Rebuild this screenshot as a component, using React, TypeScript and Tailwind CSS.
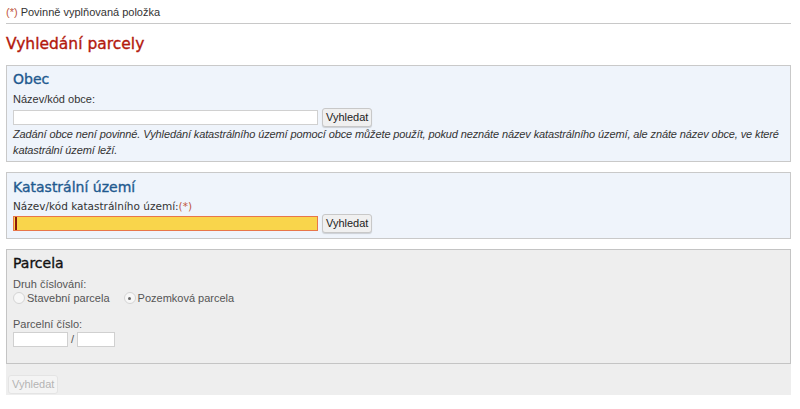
import React from "react";

const arial = { fontFamily: '"Liberation Sans", Arial, sans-serif' };
const dejavu = { fontFamily: '"DejaVu Sans", Verdana, sans-serif' };

function SearchButton({ disabled }: { disabled?: boolean }) {
  return (
    <button
      type="button"
      disabled={disabled}
      style={arial}
      className={`h-[19px] rounded-[3px] border px-[3px] text-[11px] leading-none ${
        disabled
          ? "border-[#e4e4e4] bg-[#f4f4f4] text-[#b5b5b5]"
          : "border-[#c8c8c8] bg-[#f0f0f0] text-[#222] shadow-[0_1px_1px_rgba(0,0,0,0.15)]"
      }`}
    >
      Vyhledat
    </button>
  );
}

function Radio({ checked, label }: { checked?: boolean; label: string }) {
  return (
    <label className="flex items-center gap-[2px]">
      <span className="flex h-[12px] w-[12px] items-center justify-center rounded-full border border-[#d4d4d4] bg-[#f7f7f7]">
        {checked ? <span className="h-[3px] w-[3px] rounded-full bg-[#666]" /> : null}
      </span>
      <span>{label}</span>
    </label>
  );
}

export default function App() {
  return (
    <div className="h-[409px] w-[800px] bg-white text-[#222]" style={arial}>
      <div className="px-[6px] pt-[4px]">
        <p className="h-[16px] text-[11px] leading-[16px] text-[#333]">
          <span className="text-[#c0573e]">(*)</span> Povinně vyplňovaná položka
        </p>
        <div className="mr-[3px] mt-[3px] h-px bg-[#c8c8c8]" />
        <h1
          style={dejavu}
          className="mt-[10px] h-[20px] text-[15.5px] leading-[20px] text-[#b3190d] [-webkit-text-stroke:0.35px_#b3190d]"
        >
          Vyhledání parcely
        </h1>

        <section className="mr-[3px] mt-[11px] h-[97px] border border-[#c9c9c9] bg-[#eff4fb] px-[6px] pt-[3px]">
          <h2
            style={dejavu}
            className="h-[20px] text-[14px] leading-[20px] text-[#1f5a8f] [-webkit-text-stroke:0.35px_#1f5a8f]"
          >
            Obec
          </h2>
          <div className="mt-[3px] text-[11px] leading-[14px] text-[#333]">Název/kód obce:</div>
          <div className="mt-[2px] flex items-center gap-[4px]">
            <input
              type="text"
              className="h-[15px] w-[305px] border border-[#d0d0d0] bg-white"
            />
            <SearchButton />
          </div>
          <p className="-mt-[1px] whitespace-nowrap text-[11px] italic leading-[16px] tracking-[-0.12px] text-[#333]">
            Zadání obce není povinné. Vyhledání katastrálního území pomocí obce můžete použít, pokud
            neznáte název katastrálního území, ale znáte název obce, ve které
            <br />
            katastrální území leží.
          </p>
        </section>

        <section className="mr-[3px] mt-[10px] h-[67px] border border-[#c9c9c9] bg-[#eff4fb] px-[6px] pt-[4px]">
          <h2
            style={dejavu}
            className="h-[20px] text-[14px] leading-[20px] text-[#1f5a8f] [-webkit-text-stroke:0.35px_#1f5a8f]"
          >
            Katastrální území
          </h2>
          <div style={dejavu} className="mt-[2px] text-[10.5px] leading-[14px] text-[#333]">
            Název/kód katastrálního území:<span className="text-[#c0573e]">(*)</span>
          </div>
          <div className="mt-[1px] flex items-center gap-[4px]">
            <div className="h-[15px] w-[305px] border border-[#e8764a] bg-[#f9d54b] pl-[1px]">
              <div className="h-full w-[2px] bg-[#8a1a0a]" />
            </div>
            <SearchButton />
          </div>
        </section>

        <section className="mr-[3px] mt-[10px] h-[115px] border border-[#c4c4c4] bg-[#eeeeee] px-[6px] pt-[3px]">
          <h2
            style={dejavu}
            className="h-[20px] text-[14px] leading-[20px] text-[#111] [-webkit-text-stroke:0.35px_#111]"
          >
            Parcela
          </h2>
          <div className="mt-[4px] text-[11px] leading-[14px] text-[#555]">Druh číslování:</div>
          <div className="flex items-center gap-[14px] text-[11px] leading-[14px] text-[#555]">
            <Radio label="Stavební parcela" />
            <Radio checked label="Pozemková parcela" />
          </div>
          <div className="mt-[12px] text-[11px] leading-[14px] text-[#555]">Parcelní číslo:</div>
          <div className="flex items-center gap-[3px] text-[11px] text-[#555]">
            <input type="text" className="h-[15px] w-[55px] border border-[#d0d0d0] bg-white" />
            <span>/</span>
            <input type="text" className="h-[15px] w-[38px] border border-[#d0d0d0] bg-white" />
          </div>
        </section>

        <div className="mr-[3px] flex h-[31px] items-end bg-[#eeeeee] pb-[1px] pl-[2px]">
          <SearchButton disabled />
        </div>
      </div>
    </div>
  );
}
